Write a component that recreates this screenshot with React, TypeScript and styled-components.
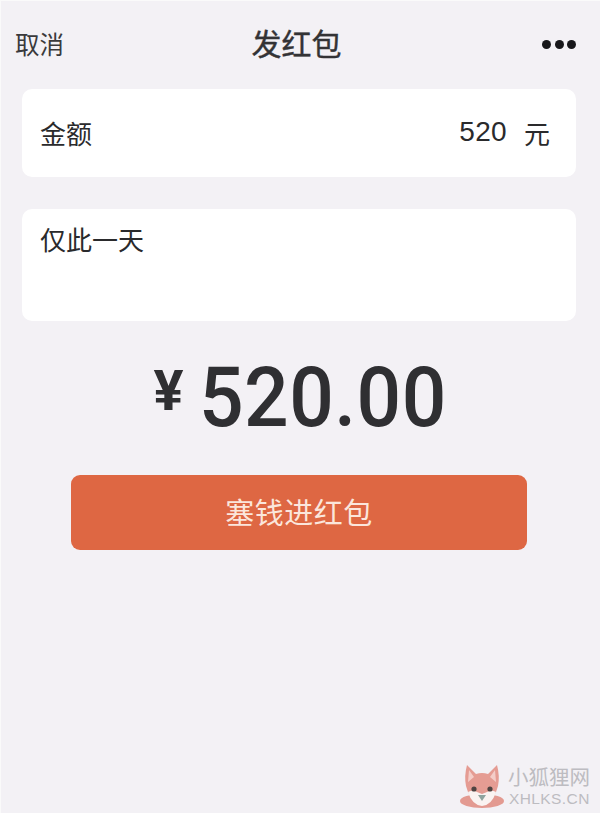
import React from 'react';
import styled, { createGlobalStyle } from 'styled-components';

const GlobalStyle = createGlobalStyle`
  html, body {
    margin: 0;
    padding: 0;
    background: #f3f1f5;
  }
  * {
    box-sizing: border-box;
  }
`;

const Page = styled.div`
  position: relative;
  width: 600px;
  height: 813px;
  overflow: hidden;
  padding: 0 24px 0 22px;
  background: #f3f1f5;
  box-shadow: inset 1px 1px 0 #fafafa;
  color: #2b2b2d;
  font-family: 'Noto Sans CJK SC', 'Liberation Sans', sans-serif;
`;

const Header = styled.header`
  display: grid;
  grid-template-columns: 1fr auto 1fr;
  align-items: center;
  height: 89px;
  margin-left: -7px;
`;

const Cancel = styled.span`
  font-size: 24.5px;
  color: #3a3a3c;
  margin-bottom: 3px;
`;

const Title = styled.h1`
  margin: 0 0 6px;
  padding-left: 2px;
  font-size: 30px;
  font-weight: 400;
  -webkit-text-stroke: 0.4px #333335;
  color: #333335;
`;

const More = styled.div`
  display: flex;
  justify-content: flex-end;
  gap: 3.5px;
  margin-bottom: 1px;
`;

const Dot = styled.i`
  width: 9px;
  height: 9px;
  border-radius: 50%;
  background: #17171a;
`;

const Card = styled.div<{ $height: number; $top?: boolean }>`
  display: flex;
  align-items: ${(p) => (p.$top ? 'flex-start' : 'center')};
  justify-content: space-between;
  width: 554px;
  height: ${(p) => p.$height}px;
  padding: ${(p) => (p.$top ? '11px 26px 0 18px' : '0 26px 2px 18px')};
  background: #fff;
  border-radius: 10px;
  font-size: 26px;
  color: #2a2a2c;
`;

const Stack = styled.div`
  display: flex;
  flex-direction: column;
  gap: 32px;
`;

const Value = styled.span`
  display: flex;
  align-items: center;
  gap: 17px;
`;

const Digits = styled.span`
  font-family: 'Liberation Sans', sans-serif;
  font-size: 28px;
  letter-spacing: 0.3px;
`;

const Amount = styled.div`
  display: flex;
  align-items: center;
  justify-content: center;
  gap: 15px;
  height: 154px;
  color: #2f2f32;
  font-family: 'Roboto', 'Liberation Sans', sans-serif;
  font-weight: 500;
`;

const Currency = styled.span`
  font-size: 56px;
  font-weight: 700;
  margin-top: -14px;
`;

/* the reference digits are narrower than Roboto, so squeeze them */
const Sum = styled.span`
  display: inline-block;
  width: 246px;
  font-size: 84px;
  line-height: 1;
  letter-spacing: 0.5px;
  white-space: nowrap;
  transform: scaleX(0.935);
  transform-origin: left center;
`;

const SendButton = styled.button`
  display: block;
  width: 456px;
  height: 75px;
  margin-left: 49px;
  padding: 0 0 3px;
  border: 0;
  border-radius: 9px;
  background: #de6743;
  color: #fbe6dc;
  font-family: inherit;
  font-size: 29px;
  letter-spacing: 0.5px;
`;

const Watermark = styled.div`
  position: absolute;
  left: 459px;
  top: 762px;
  display: flex;
  gap: 3px;
`;

const BrandText = styled.div`
  display: flex;
  flex-direction: column;
  color: #bdbcc1;
`;

const BrandName = styled.span`
  font-size: 20.5px;
  line-height: 26px;
  margin-top: 1px;
`;

const BrandUrl = styled.span`
  font-family: 'Liberation Sans', sans-serif;
  font-size: 15.5px;
  line-height: 20px;
  letter-spacing: 0.4px;
  margin-left: 1px;
`;

const FoxLogo = () => (
  <svg width="46" height="47" viewBox="0 0 46 47">
    <ellipse cx="23" cy="39" rx="22" ry="7" fill="#e39a91" />
    <path d="M8 3 L17 12 Q23 10 29 12 L38 3 Q41 14 39 24 Q36 38 23 43 Q10 38 7 24 Q5 14 8 3Z" fill="#e59c93" />
    <path d="M10 8 L15 15 L9 20Z M36 8 L31 15 L37 20Z" fill="#f4cdc8" />
    <path d="M9 30 Q14 27 18 30 L23 32 L28 30 Q32 27 37 30 Q33 43 23 44 Q13 43 9 30Z" fill="#faf3f1" />
    <circle cx="15" cy="27" r="2.6" fill="#4f4442" />
    <circle cx="31" cy="27" r="2.6" fill="#4f4442" />
    <path d="M19 33 L27 33 L23 39Z" fill="#8fa39e" />
  </svg>
);

export default function App() {
  return (
    <Page>
      <GlobalStyle />
      <Header>
        <Cancel>取消</Cancel>
        <Title>发红包</Title>
        <More>
          <Dot />
          <Dot />
          <Dot />
        </More>
      </Header>
      <Stack>
        <Card $height={88}>
          <span>金额</span>
          <Value>
            <Digits>520</Digits>
            <span>元</span>
          </Value>
        </Card>
        <Card $height={112} $top>
          仅此一天
        </Card>
      </Stack>
      <Amount>
        <Currency>¥</Currency>
        <Sum>520.00</Sum>
      </Amount>
      <SendButton>塞钱进红包</SendButton>
      <Watermark>
        <FoxLogo />
        <BrandText>
          <BrandName>小狐狸网</BrandName>
          <BrandUrl>XHLKS.CN</BrandUrl>
        </BrandText>
      </Watermark>
    </Page>
  );
}
